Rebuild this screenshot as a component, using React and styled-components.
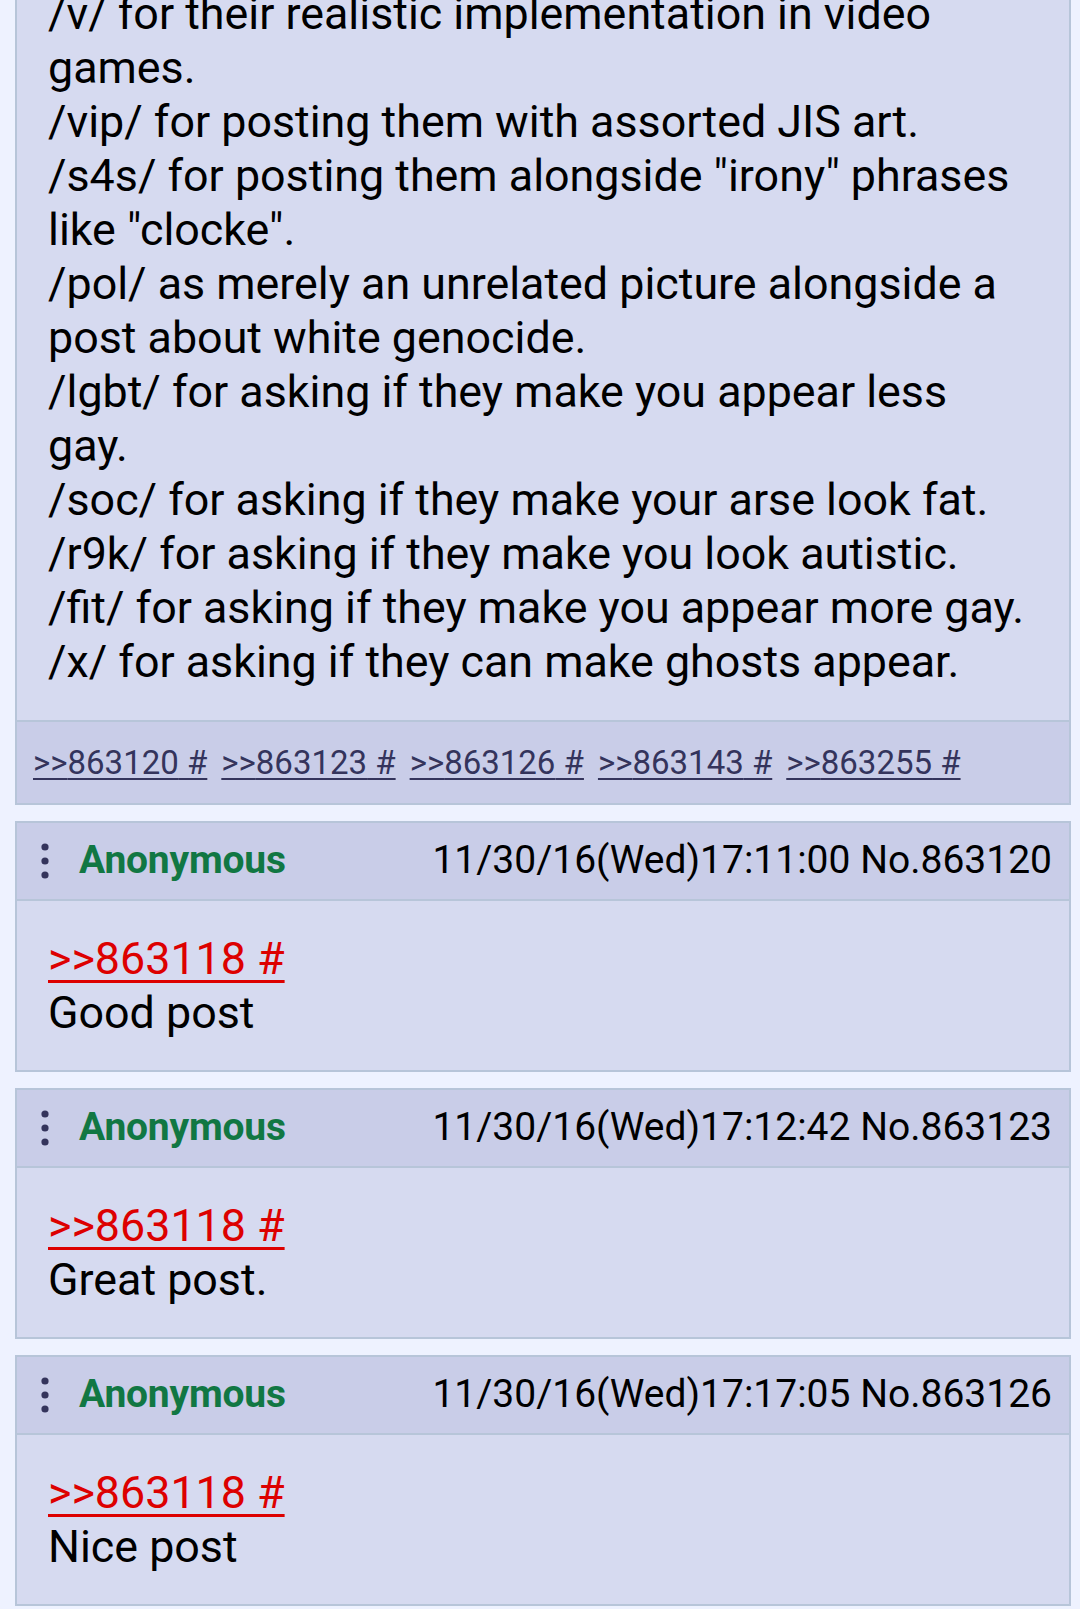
import React from 'react';
import styled, { createGlobalStyle } from 'styled-components';

const GlobalStyle = createGlobalStyle`
html, body {
  margin: 0;
  padding: 0;
  background: #eef2ff;
}
body {
  font-family: Roboto, "Noto Sans", "Liberation Sans", sans-serif;
  color: #000;
  overflow: hidden;
}
`;

const Thread = styled.div`
display: flex;
flex-direction: column;
gap: 16px;
margin: -44px 9px 0 15px;
`;

const PostCard = styled.div`
background: #d6daf0;
border: 2px solid #b7c5d9;
display: flex;
flex-direction: column;
`;

const PostHeader = styled.div`
display: flex;
align-items: center;
box-sizing: border-box;
height: 78px;
background: #c9cde8;
border-bottom: 2px solid #b7c5d9;
padding: 0 17px 3px 24px;
font-size: 39px;
`;

const MenuDots = styled.svg`
width: 8px;
height: 36px;
flex-shrink: 0;
margin-right: 30px;
margin-top: 3px;
`;

const Name = styled.span`
color: #117743;
font-weight: 700;
letter-spacing: -0.2px;
`;

const DateNo = styled.span`
margin-left: auto;
color: #000;
`;

const PostBody = styled.div`
padding: ${p => (p.$op ? '29px 38px 31px 31px' : '31px 31px 30px 31px')};
font-size: 44.8px;
line-height: 54px;
`;

const QuoteLink = styled.a`
color: #dd0000;
text-decoration: underline;
text-decoration-thickness: 3px;
text-underline-offset: 6px;
`;

const Replies = styled.div`
display: flex;
align-items: center;
gap: 14px;
height: 81px;
background: #c9cde8;
border-top: 2px solid #b7c5d9;
padding: 0 16px;
font-size: 33px;
`;

const ReplyLink = styled.a`
color: #34345c;
text-decoration: underline;
text-decoration-thickness: 2px;
text-underline-offset: 4px;
`;

const Dots = () => (
  <MenuDots viewBox="0 0 8 36">
    <circle cx="4" cy="4" r="3.6" fill="#34345c" />
    <circle cx="4" cy="18" r="3.6" fill="#34345c" />
    <circle cx="4" cy="32" r="3.6" fill="#34345c" />
  </MenuDots>
);

const opLines = [
  '/v/ for their realistic implementation in video games.',
  '/vip/ for posting them with assorted JIS art.',
  '/s4s/ for posting them alongside "irony" phrases like "clocke".',
  '/pol/ as merely an unrelated picture alongside a post about white genocide.',
  '/lgbt/ for asking if they make you appear less gay.',
  '/soc/ for asking if they make your arse look fat.',
  '/r9k/ for asking if they make you look autistic.',
  '/fit/ for asking if they make you appear more gay.',
  '/x/ for asking if they can make ghosts appear.',
];

const replyIds = ['863120', '863123', '863126', '863143', '863255'];

const posts = [
  { no: '863120', time: '11/30/16(Wed)17:11:00', text: 'Good post' },
  { no: '863123', time: '11/30/16(Wed)17:12:42', text: 'Great post.' },
  { no: '863126', time: '11/30/16(Wed)17:17:05', text: 'Nice post' },
];

const Post = ({ no, time, text }) => (
  <PostCard>
    <PostHeader>
      <Dots />
      <Name>Anonymous</Name>
      <DateNo>{time} No.{no}</DateNo>
    </PostHeader>
    <PostBody>
      <QuoteLink>&gt;&gt;863118 #</QuoteLink>
      <br />
      {text}
    </PostBody>
  </PostCard>
);

export default function App() {
  return (
    <>
      <GlobalStyle />
      <Thread>
        <PostCard>
          <PostBody $op>
            {opLines.map((l, i) => (
              <React.Fragment key={i}>
                {l}
                {i < opLines.length - 1 && <br />}
              </React.Fragment>
            ))}
          </PostBody>
          <Replies>
            {replyIds.map(id => (
              <ReplyLink key={id}>&gt;&gt;{id} #</ReplyLink>
            ))}
          </Replies>
        </PostCard>
        {posts.map(p => (
          <Post key={p.no} {...p} />
        ))}
      </Thread>
    </>
  );
}
